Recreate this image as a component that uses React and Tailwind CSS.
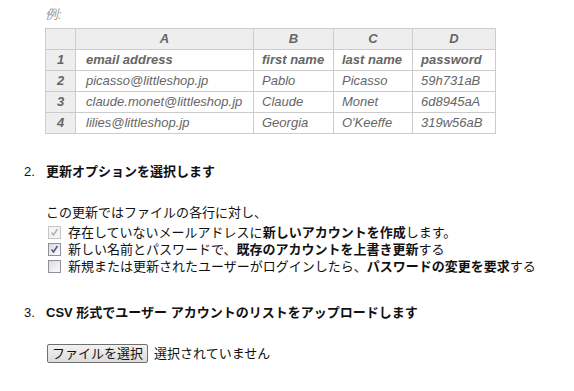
const rows = [
  ["1", "email address", "first name", "last name", "password", true],
  ["2", "picasso@littleshop.jp", "Pablo", "Picasso", "59h731aB"],
  ["3", "claude.monet@littleshop.jp", "Claude", "Monet", "6d8945aA"],
  ["4", "lilies@littleshop.jp", "Georgia", "O'Keeffe", "319w56aB"],
];

const Check = ({ state }) => {
  // state: "disabled" | "checked" | "empty"
  const disabled = state === "disabled";
  return (
    <span
      className={`inline-flex items-center justify-center w-[13px] h-[13px] border ${
        disabled ? "border-[#c5c5c5] bg-[#f4f4f4]" : "border-[#8f8f9d] bg-gradient-to-br from-[#dcdcdc] to-[#fbfbfb]"
      }`}
    >
      {state !== "empty" && (
        <svg width="9" height="9" viewBox="0 0 9 9">
          <path
            d="M1.5 4.5 L3.5 7 L7.5 1"
            fill="none"
            stroke={disabled ? "#b5b5b5" : "#4a5a9a"}
            strokeWidth="1.6"
          />
        </svg>
      )}
    </span>
  );
};

export default function App() {
  return (
    <div className="w-[574px] h-[391px] bg-white text-[13px] text-[#111] font-['Liberation_Sans','Noto_Sans_CJK_JP',sans-serif]">
      <div className="pl-[45px] pt-[7px]">
        <p className="text-[#999] italic leading-[16px]">例:</p>
        <table className="mt-[5px] border-collapse table-fixed w-[450px] text-[#666] italic leading-[20px] whitespace-nowrap">
          <colgroup>
            <col className="w-[30px]" />
            <col className="w-[178px]" />
            <col className="w-[80px]" />
            <col className="w-[79px]" />
            <col className="w-[83px]" />
          </colgroup>
          <thead>
            <tr className="bg-[#eee] font-bold">
              <th className="border border-[#ccc]"></th>
              <th className="border border-[#ccc]">A</th>
              <th className="border border-[#ccc]">B</th>
              <th className="border border-[#ccc]">C</th>
              <th className="border border-[#ccc]">D</th>
            </tr>
          </thead>
          <tbody>
            {rows.map(([n, a, b, c, d, bold]) => (
              <tr key={n} className={bold ? "font-bold" : ""}>
                <td className="border border-[#ccc] bg-[#eee] text-center font-bold">{n}</td>
                <td className="border border-[#ccc] px-[10px]">{a}</td>
                <td className="border border-[#ccc] px-[8px]">{b}</td>
                <td className="border border-[#ccc] px-[8px]">{c}</td>
                <td className="border border-[#ccc] px-[8px]">{d}</td>
              </tr>
            ))}
          </tbody>
        </table>
      </div>

      <div className="mt-[28px] pl-[24px] flex">
        <span className="w-[22px]">2.</span>
        <span className="font-bold">更新オプションを選択します</span>
      </div>
      <div className="pl-[46px] mt-[21px] leading-[17px]">
        <p className="leading-[19px]">この更新ではファイルの各行に対し、</p>
        <div className="mt-[2px] flex items-center gap-[7px] pl-[2px]">
          <Check state="disabled" />
          <span>存在していないメールアドレスに<b>新しいアカウントを作成</b>します。</span>
        </div>
        <div className="flex items-center gap-[7px] pl-[2px]">
          <Check state="checked" />
          <span>新しい名前とパスワードで、<b>既存のアカウントを上書き更新</b>する</span>
        </div>
        <div className="flex items-center gap-[7px] pl-[2px]">
          <Check state="empty" />
          <span>新規または更新されたユーザーがログインしたら、<b>パスワードの変更を要求</b>する</span>
        </div>
      </div>

      <div className="mt-[28px] pl-[24px] flex">
        <span className="w-[22px]">3.</span>
        <span className="font-bold">CSV 形式でユーザー アカウントのリストをアップロードします</span>
      </div>
      <div className="pl-[47px] mt-[22px] flex items-center gap-[6px]">
        <button className="h-[19px] px-[4px] border border-[#707070] rounded-[2px] bg-gradient-to-b from-[#f2f2f2] to-[#dcdcdc] leading-[16px]">
          ファイルを選択
        </button>
        <span>選択されていません</span>
      </div>
    </div>
  );
}
